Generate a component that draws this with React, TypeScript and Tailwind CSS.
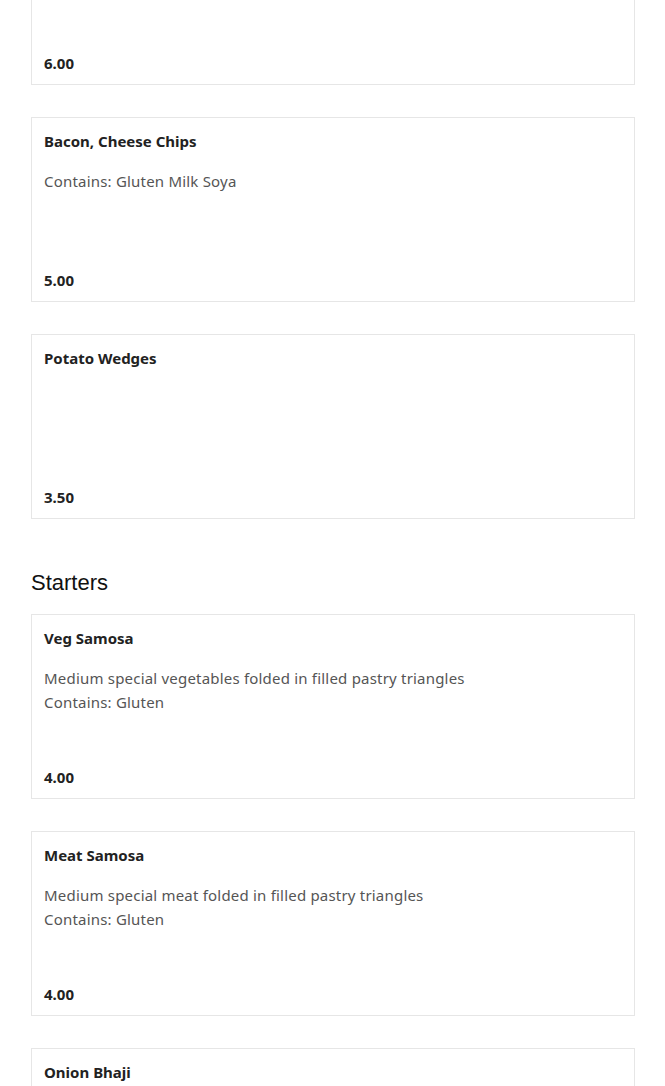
import React from "react";

type Item = { name: string; desc?: string[]; price: string };

function Card({ item, className = "" }: { item: Item; className?: string }) {
  return (
    <div
      className={`flex h-[185px] flex-col border border-[#e6e6e6] bg-white px-[12px] pt-[11px] pb-[9px] ${className}`}
    >
      {item.name && (
        <div className="text-[15px] font-bold leading-[24px] text-[#222]">{item.name}</div>
      )}
      {item.desc && (
        <div className="mt-[16px] text-[15px] leading-[24px] text-[#555] tracking-[0.2px]">
          {item.desc.map((d, i) => (
            <div key={i}>{d}</div>
          ))}
        </div>
      )}
      <div className="mt-auto text-[15px] font-bold leading-[24px] text-[#222]">{item.price}</div>
    </div>
  );
}

export default function App() {
  const sides: Item[] = [
    { name: "", price: "6.00" },
    { name: "Bacon, Cheese Chips", desc: ["Contains: Gluten Milk Soya"], price: "5.00" },
    { name: "Potato Wedges", price: "3.50" },
  ];
  const starters: Item[] = [
    {
      name: "Veg Samosa",
      desc: ["Medium special vegetables folded in filled pastry triangles", "Contains: Gluten"],
      price: "4.00",
    },
    {
      name: "Meat Samosa",
      desc: ["Medium special meat folded in filled pastry triangles", "Contains: Gluten"],
      price: "4.00",
    },
    { name: "Onion Bhaji", price: "4.00" },
  ];
  return (
    <div
      className="h-[1086px] overflow-hidden bg-white pl-[31px] pr-[30px]"
      style={{ fontFamily: '"Noto Sans", "Open Sans", sans-serif' }}
    >
      <div className="-mt-[100px] flex flex-col gap-[32px]">
        {sides.map((s, i) => (
          <Card key={i} item={s} />
        ))}
      </div>
      <h2
        className="mt-[51px] mb-[18px] text-[22px] leading-[26px] text-[#111]"
        style={{ fontFamily: '"Liberation Sans", Arial, sans-serif' }}
      >
        Starters
      </h2>
      <div className="flex flex-col gap-[32px]">
        {starters.map((s, i) => (
          <Card key={i} item={s} />
        ))}
      </div>
    </div>
  );
}
